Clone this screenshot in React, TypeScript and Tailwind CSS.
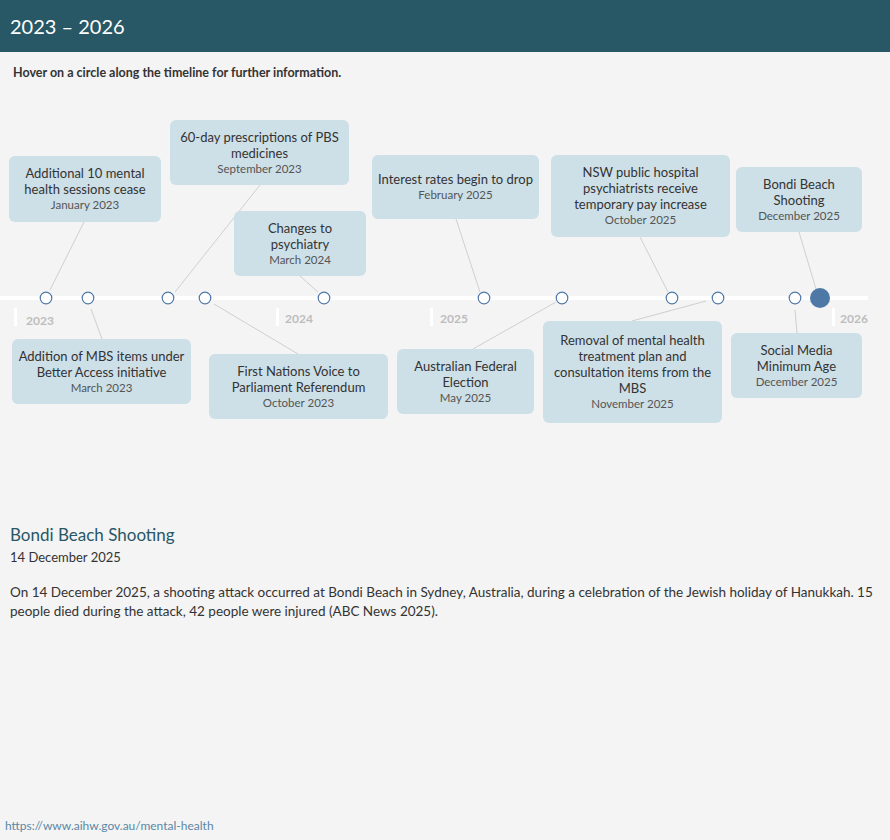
const font = { fontFamily: "Lato, 'Noto Sans', sans-serif" };

// page coords minus 100 (canvas top)
const events = [
  { x: 9, y: 56, w: 152, h: 66, title: "Additional 10 mental health sessions cease", date: "January 2023" },
  { x: 170, y: 20, w: 179, h: 65, title: "60-day prescriptions of PBS medicines", date: "September 2023" },
  { x: 234, y: 111, w: 132, h: 65, title: "Changes to psychiatry", date: "March 2024" },
  { x: 372, y: 55, w: 167, h: 64, title: "Interest rates begin to drop", date: "February 2025" },
  { x: 551, y: 55, w: 179, h: 82, title: "NSW public hospital psychiatrists receive temporary pay increase", date: "October 2025" },
  { x: 736, y: 67, w: 126, h: 65, title: "Bondi Beach Shooting", date: "December 2025" },
  { x: 12, y: 239, w: 179, h: 65, title: "Addition of MBS items under Better Access initiative", date: "March 2023" },
  { x: 209, y: 254, w: 179, h: 65, title: "First Nations Voice to Parliament Referendum", date: "October 2023" },
  { x: 397, y: 249, w: 137, h: 65, title: "Australian Federal Election", date: "May 2025" },
  { x: 543, y: 221, w: 179, h: 102, title: "Removal of mental health treatment plan and consultation items from the MBS", date: "November 2025" },
  { x: 731, y: 233, w: 131, h: 65, title: "Social Media Minimum Age", date: "December 2025" },
];

const leaders = [
  [84, 122, 50, 190], [260, 85, 175, 192], [300, 176, 318, 192], [456, 119, 480, 192],
  [640, 137, 668, 192], [799, 132, 816, 189], [91, 209, 102, 239], [214, 204, 298, 254],
  [556, 202, 473, 249], [706, 201, 632, 221], [795, 210, 797, 233],
];

const dots = [46, 88, 168, 205, 324, 484, 562, 672, 718, 795];

const years = [
  { tick: 14, label: 26, y: 212, text: "2023" },
  { tick: 276, label: 285, y: 210, text: "2024" },
  { tick: 430, label: 440, y: 210, text: "2025" },
  { tick: 832, label: 840, y: 210, text: "2026" },
];

export default function App() {
  return (
    <div className="relative h-[840px] w-[890px] bg-[#f4f4f4] text-[#333]" style={font}>
      <div className="flex h-[52px] items-center bg-[#285766] px-[10px] text-[20px] text-white">2023 – 2026</div>
      <div className="h-[48px] px-[13px] pt-[12px] text-[12.5px] font-bold text-[#333]">
        Hover on a circle along the timeline for further information.
      </div>

      <div className="relative h-[400px]">
        <div className="absolute left-0 top-[196px] h-[4px] w-[868px] bg-white" />
        {years.map((y) => (
          <div key={y.text}>
            <div className="absolute top-[208px] h-[18px] w-[3px] bg-white" style={{ left: y.tick }} />
            <div className="absolute text-[12px] font-bold text-[#bdbdbd]" style={{ left: y.label, top: y.y }}>{y.text}</div>
          </div>
        ))}
        <svg className="absolute inset-0" width="890" height="400">
          {leaders.map(([x1, y1, x2, y2], i) => (
            <line key={i} x1={x1} y1={y1} x2={x2} y2={y2} stroke="#cfcfcf" strokeWidth="1" />
          ))}
          {dots.map((x) => (
            <circle key={x} cx={x} cy={198} r={5.8} fill="#fff" stroke="#4e79a7" strokeWidth="1.2" />
          ))}
          <circle cx={820} cy={198} r={10} fill="#4e79a7" />
        </svg>
        {events.map((e) => (
          <div
            key={e.title}
            className="absolute flex flex-col items-center justify-center rounded-[6px] bg-[#cddfe7] px-[6px] text-center leading-[16px]"
            style={{ left: e.x, top: e.y, width: e.w, height: e.h }}
          >
            <div className="text-[13px] text-[#333]">{e.title}</div>
            <div className="text-[11.5px] text-[#555]">{e.date}</div>
          </div>
        ))}
      </div>

      <div className="px-[10px] pt-[22px]">
        <div className="text-[17px] text-[#285766]">Bondi Beach Shooting</div>
        <div className="text-[13px] text-[#333]">14 December 2025</div>
        <p className="mt-[16px] text-[13.5px] leading-[19px] text-[#333]">
          On 14 December 2025, a shooting attack occurred at Bondi Beach in Sydney, Australia, during a celebration of the Jewish holiday of Hanukkah. 15 people died during the attack, 42 people were injured (ABC News 2025).
        </p>
      </div>

      <div className="absolute bottom-[5px] left-[5px] text-[12px] text-[#5b87a5]">https://www.aihw.gov.au/mental-health</div>
    </div>
  );
}
